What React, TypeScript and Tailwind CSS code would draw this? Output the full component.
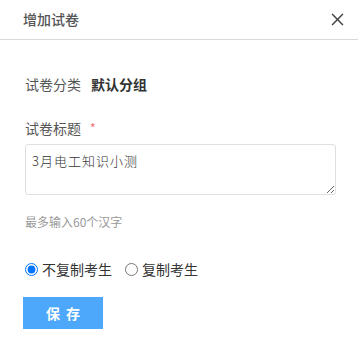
import { useState } from "react"

export default function App() {
  const [title, setTitle] = useState("3月电工知识小测")
  const [copy, setCopy] = useState("no")

  return (
    <div className="w-[358px] h-[345px] bg-white font-['Microsoft_YaHei','Noto_Sans_CJK_SC',sans-serif] text-[#555]">
      {/* Header */}
      <div className="h-10 flex items-center justify-between pl-[23px] pr-[14px] border-b border-[#d9d9d9]">
        <span className="text-[14px] text-[#555] font-medium">增加试卷</span>
        <svg width="13" height="13" viewBox="0 0 12 12" className="text-[#444]">
          <path d="M1 1L11 11M11 1L1 11" stroke="currentColor" strokeWidth="1.4" />
        </svg>
      </div>

      <div className="px-[25px]">
        {/* Category */}
        <div className="mt-[34px] flex items-center text-[14px] leading-5">
          <span className="text-[#555]">试卷分类</span>
          <span className="ml-[10px] font-bold text-[#333]">默认分组</span>
        </div>

        {/* Title */}
        <div className="mt-6 flex items-center text-[14px] leading-5">
          <span className="text-[#555]">试卷标题</span>
          <span className="ml-[9px] text-[#f56c6c] text-[12px]">*</span>
        </div>
        <textarea
          value={title}
          onChange={(e) => setTitle(e.target.value)}
          className="mt-[6px] block w-[311px] h-[51px] border border-[#e0e0e0] rounded-[3px] px-[6px] pt-[6px] pb-[4px] text-[13px] tracking-[1px] text-[#333] font-light outline-none"
        />
        <div className="mt-[19px] text-[12px] leading-4 text-[#999]">最多输入60个汉字</div>

        {/* Radios */}
        <div className="mt-[29px] flex items-center text-[14px] leading-5 text-[#333]">
          <label className="flex items-center">
            <input
              type="radio"
              name="copy"
              checked={copy === "no"}
              onChange={() => setCopy("no")}
              className="m-0 w-[13px] h-[13px]"
            />
            <span className="ml-[4px]">不复制考生</span>
          </label>
          <label className="flex items-center ml-[13px]">
            <input
              type="radio"
              name="copy"
              checked={copy === "yes"}
              onChange={() => setCopy("yes")}
              className="m-0 w-[13px] h-[13px]"
            />
            <span className="ml-[4px]">复制考生</span>
          </label>
        </div>

        <button className="mt-[18px] -ml-[2px] w-20 h-8 bg-[#4da8fb] text-white text-[14px] font-bold tracking-[6px] pl-[6px]">
          保存
        </button>
      </div>
    </div>
  )
}
